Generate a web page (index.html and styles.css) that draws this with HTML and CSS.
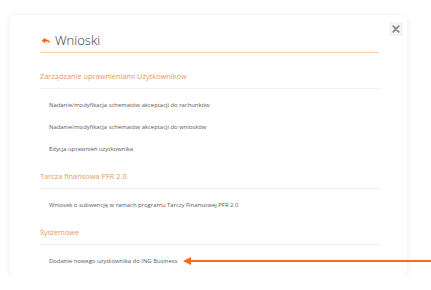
FILE: index.html
```html
<!DOCTYPE html>
<html lang="pl">
<head>
  <meta charset="UTF-8" />
  <title>Wnioski</title>
  <link rel="stylesheet" href="styles.css">
</head>
<body>

<div class="modal">
  <button class="close" title="Zamknij">
    <svg width="8" height="8" viewBox="0 0 10 10"><path d="M1.5 1.5 L8.5 8.5 M8.5 1.5 L1.5 8.5" stroke="#8a8a8a" stroke-width="2.2" stroke-linecap="round"/></svg>
  </button>

  <h1 class="title">
    <svg class="back" width="10" height="7" viewBox="0 0 11 8"><path d="M0.5 4 L4.5 0.8 L4.5 2.6 C7.5 2.6 9.6 3.8 10.5 7 C9 5.4 7.2 5 4.5 5 L4.5 7.2 Z" fill="#ff6200"/></svg>
    Wnioski
  </h1>

  <!-- Zarządzanie -->
  <h2 class="group first">Zarządzanie uprawnieniami Użytkowników</h2>
  <ul class="items">
    <li>Nadanie/modyfikacja schematów akceptacji do rachunków</li>
    <li>Nadanie/modyfikacja schematów akceptacji do wniosków</li>
    <li>Edycja uprawnień użytkownika</li>
  </ul>

  <!-- Tarcza -->
  <h2 class="group">Tarcza finansowa PFR 2.0</h2>
  <ul class="items">
    <li>Wniosek o subwencję w ramach programu Tarczy Finansowej PFR 2.0</li>
  </ul>

  <!-- Systemowe -->
  <h2 class="group">Systemowe</h2>
  <ul class="items">
    <li class="marked">Dodanie nowego użytkownika do ING Business</li>
  </ul>
</div>

<div class="pointer"></div>

</body>
</html>
```

FILE: styles.css
```css
body {
  margin: 0;
  background: #ffffff;
  font-family: "Open Sans", Arial, sans-serif;
  color: #555;
}
.modal {
  position: relative;
  width: 397px;
  margin: 15px 0 0 10px;
  padding: 15px 28px 4px 30px;
  box-sizing: border-box;
  background: #fff;
  border-radius: 5px;
  box-shadow: 0 1px 6px rgba(0,0,0,0.08);
}
.close {
  position: absolute;
  top: 7px;
  right: 4px;
  width: 14px;
  height: 14px;
  padding: 0;
  border: none;
  background: #f5f5f5;
  display: flex;
  align-items: center;
  justify-content: center;
}
.title {
  margin: 0;
  height: 20px;
  line-height: 20px;
  padding-bottom: 2px;
  border-bottom: 1px solid #f5cfae;
  font-size: 13px;
  font-weight: 300;
  color: #333;
  display: flex;
  align-items: center;
  gap: 4px;
}
.back {
  margin-left: 1px;
}
.group {
  margin: 6px 0 0;
  height: 20px;
  line-height: 20px;
  padding-bottom: 2px;
  border-bottom: 1px solid #f1f1f1;
  font-size: 7.4px;
  font-weight: 400;
  color: #e8995f;
}
.group.first {
  margin-top: 13px;
}
.items {
  list-style: none;
  margin: 5px 0 0;
  padding: 0;
}
.items li {
  height: 22px;
  line-height: 22px;
  padding-left: 9px;
  font-size: 5.9px;
  color: #5a5a5a;
}
.pointer {
  position: absolute;
  left: 183px;
  right: 0;
  top: 257px;
  height: 8px;
}
.pointer::before {
  content: "";
  position: absolute;
  left: 0;
  top: 0;
  border-top: 4px solid transparent;
  border-bottom: 4px solid transparent;
  border-right: 8px solid #ff6a13;
}
.pointer::after {
  content: "";
  position: absolute;
  left: 6px;
  right: 0;
  top: 3px;
  height: 2px;
  background: #ff6a13;
}
```
